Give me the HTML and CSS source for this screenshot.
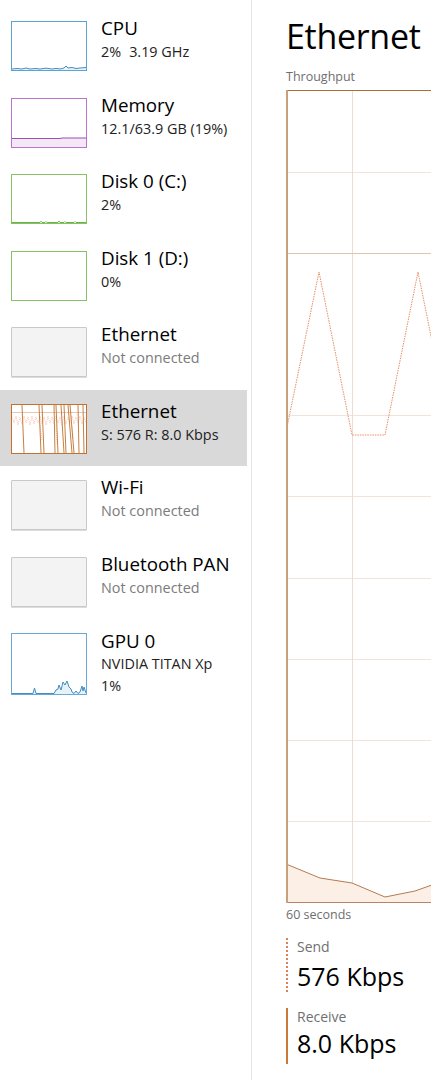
FILE: index.html
```html
<!DOCTYPE html>
<html>
<head>
<meta charset="utf-8">
<link rel="stylesheet" href="styles.css">
</head>
<body>
<div class="app">
  <aside class="sidebar">
    <div class="item">
      <div class="thumb cpu">
        <svg viewBox="0 0 74 48" preserveAspectRatio="none"><path class="fill" d="M0,48 L0,47 L5,46.5 L10,47 L14,46 L18,47 L24,46.5 L28,47 L34,46.2 L40,47 L44,46.4 L48,47 L52,46 L54,44 L56,46 L60,45.5 L64,46.5 L68,46 L74,45.5 L74,48 Z"/><path class="line" d="M0,47 L5,46.5 L10,47 L14,46 L18,47 L24,46.5 L28,47 L34,46.2 L40,47 L44,46.4 L48,47 L52,46 L54,44 L56,46 L60,45.5 L64,46.5 L68,46 L74,45.5"/></svg>
      </div>
      <div class="info">
        <div class="name">CPU</div>
        <div class="sub">2%<span class="gap"></span>3.19 GHz</div>
      </div>
    </div>
    <div class="item">
      <div class="thumb mem">
        <svg viewBox="0 0 74 48" preserveAspectRatio="none"><path class="fill" d="M0,48 L0,39.5 L48,39.5 L50,39 L74,39 L74,48 Z"/><path class="line" d="M0,39.5 L48,39.5 L50,39 L74,39"/></svg>
      </div>
      <div class="info">
        <div class="name">Memory</div>
        <div class="sub">12.1/63.9 GB (19%)</div>
      </div>
    </div>
    <div class="item">
      <div class="thumb disk">
        <svg viewBox="0 0 74 48" preserveAspectRatio="none"><path class="line" d="M0,47.5 L28,47.5 L29,46.2 L30,47.5 L33,47.5 L34,46.5 L35,47.5 L46,47.5 L47,46 L48,47.5 L52,47.5 L53,46.5 L54,47.5 L62,47.5 L63,46.5 L64,47.5 L74,47.5"/></svg>
      </div>
      <div class="info">
        <div class="name">Disk 0 (C:)</div>
        <div class="sub">2%</div>
      </div>
    </div>
    <div class="item">
      <div class="thumb disk"></div>
      <div class="info">
        <div class="name">Disk 1 (D:)</div>
        <div class="sub">0%</div>
      </div>
    </div>
    <div class="item">
      <div class="thumb off"></div>
      <div class="info">
        <div class="name">Ethernet</div>
        <div class="sub muted">Not connected</div>
      </div>
    </div>
    <div class="item selected">
      <div class="thumb eth">
        <svg viewBox="0 0 74 48" preserveAspectRatio="none">
          <path class="grid" d="M0,7.5 L74,7.5"/>
          <path class="dots" d="M0,12 L2,18 L4,11 L6,20 L8,12 L10,19 L12,11 L14,18 L16,12 L18,20 L20,11 L22,19 L24,12 L26,18 L28,11 L30,19 L32,12 L34,20 L36,11 L38,18 L40,12 L42,19 L44,11 L46,18 L48,12 L50,20 L52,11 L54,19 L56,12 L58,18 L60,11 L62,19 L64,12 L66,18 L68,11 L70,19 L72,12 L74,18"/>
          <path class="dots" d="M28,20 L30,36 M44,20 L45,40 M60,22 L61,34"/>
          <path class="bars" d="M10,0 L12,48 M27,0 L29,48 M30,0 L32,48 M42,0 L43,48 M44,0 L46,48 M49,0 L52,48 M52,0 L54,48 M56,0 L60,48 M58,0 L62,48 M66,0 L67,48 M71,0 L72,48"/>
        </svg>
      </div>
      <div class="info">
        <div class="name">Ethernet</div>
        <div class="sub">S: 576 R: 8.0 Kbps</div>
      </div>
    </div>
    <div class="item">
      <div class="thumb off"></div>
      <div class="info">
        <div class="name">Wi-Fi</div>
        <div class="sub muted">Not connected</div>
      </div>
    </div>
    <div class="item">
      <div class="thumb off"></div>
      <div class="info">
        <div class="name">Bluetooth PAN</div>
        <div class="sub muted">Not connected</div>
      </div>
    </div>
    <div class="item">
      <div class="thumb gpu">
        <svg viewBox="0 0 74 60" preserveAspectRatio="none"><path class="fill" d="M0,60 L0,59.5 L21,59.5 L22.5,54 L24,59.5 L42,59.5 L44,56 L46,55 L47,51 L49,56 L51,48 L53,51 L55,47 L57,53 L59,55 L60,58 L62,59.5 L64,57 L66,59.5 L68,58 L70,52 L71,57 L72,53 L74,59 L74,60 Z"/><path class="line" d="M0,59.5 L21,59.5 L22.5,54 L24,59.5 L42,59.5 L44,56 L46,55 L47,51 L49,56 L51,48 L53,51 L55,47 L57,53 L59,55 L60,58 L62,59.5 L64,57 L66,59.5 L68,58 L70,52 L71,57 L72,53 L74,59"/></svg>
      </div>
      <div class="info gpu-info">
        <div class="name">GPU 0</div>
        <div class="sub">NVIDIA TITAN Xp</div>
        <div class="sub">1%</div>
      </div>
    </div>
  </aside>

  <main class="detail">
    <h1 class="title">Ethernet</h1>
    <div class="caption">Throughput</div>
    <div class="chart">
      <svg width="200" height="813" viewBox="0 0 200 813">
        <path class="hgrid" d="M0,82.5 H200 M0,325.5 H200 M0,406.5 H200 M0,488.5 H200 M0,569.5 H200 M0,650.5 H200 M0,731.5 H200"/>
        <path class="vgrid" d="M66.5,0 V813"/>
        <path class="scale" d="M0,163.5 H200"/>
        <path class="recv-fill" d="M0,774 L34,788 L66,793 L99,807 L129,801 L160,790 L200,785 L200,812 L0,812 Z"/>
        <path class="recv-line" d="M0,774 L34,788 L66,793 L99,807 L129,801 L160,790 L200,785"/>
        <path class="send" d="M0,342 L33,182 L66,345 L99,345 L132,182 L165,345 L200,345"/>
        <path class="top" d="M0,0.5 H200"/>
        <path class="bottom" d="M0,812.5 H200"/>
        <path class="left" d="M1,0 V813"/>
      </svg>
    </div>
    <div class="caption axis">60 seconds</div>
    <div class="stat send-stat">
      <div class="stat-label">Send</div>
      <div class="stat-value">576 Kbps</div>
    </div>
    <div class="stat recv-stat">
      <div class="stat-label">Receive</div>
      <div class="stat-value">8.0 Kbps</div>
    </div>
  </main>
</div>
</body>
</html>
```

FILE: styles.css
```css
html, body {
  margin: 0;
  padding: 0;
  background: #ffffff;
  overflow: hidden;
}
body {
  width: 431px;
  height: 1080px;
  font-family: "Open Sans", "Noto Sans", sans-serif;
  color: #000;
}
.app {
  display: flex;
  height: 1080px;
}
.sidebar {
  width: 247px;
  flex: 0 0 247px;
  padding-top: 7px;
  padding-right: 4px;
  border-right: 1px solid #e3e3e3;
}
.item {
  height: 76.5px;
  box-sizing: border-box;
  display: flex;
  align-items: flex-start;
  padding-left: 11px;
}
.item.selected {
  background: #d9d9d9;
}
.thumb {
  width: 74px;
  height: 48px;
  margin-top: 14px;
  border: 1px solid #999;
  background: #fff;
  flex: 0 0 auto;
}
.thumb svg {
  display: block;
  width: 74px;
  height: 48px;
}
.thumb .line {
  fill: none;
  stroke-width: 1;
}
.thumb.cpu { border-color: #5aa4d0; }
.thumb.cpu .line { stroke: #3f8fc3; }
.thumb.cpu .fill { fill: #eaf3f9; }
.thumb.mem { border-color: #b975ca; }
.thumb.mem .line { stroke: #9d4db3; }
.thumb.mem .fill { fill: #f4e8f6; }
.thumb.disk { border-color: #86c266; }
.thumb.disk .line { stroke: #6cb14a; }
.thumb.off {
  border-color: #c9c9c9;
  background: #f3f3f3;
  border-radius: 1px;
  box-shadow: 0 1px 0 #dcdcdc;
}
.thumb.eth {
  border-color: #c3712c;
}
.thumb.eth .grid { stroke: #e8c9b0; stroke-width: 1; fill: none; }
.thumb.eth .dots { stroke: #ee9f7f; stroke-width: 0.6; stroke-dasharray: 1 1; fill: none; }
.thumb.eth .bars { stroke: #c0702a; stroke-width: 0.9; fill: none; }
.thumb.gpu {
  height: 60px;
  border-color: #6aa9d5;
}
.thumb.gpu svg { height: 60px; }
.thumb.gpu .line { stroke: #3f8fc3; }
.thumb.gpu .fill { fill: #e6f1f8; }

.info {
  margin-left: 14px;
  padding-top: 9px;
}
.name {
  font-size: 18.8px;
  line-height: 25px;
  color: #000;
  white-space: nowrap;
}
.sub {
  font-size: 14.4px;
  line-height: 22px;
  color: #222;
  white-space: nowrap;
}
.sub.muted { color: #7b7b7b; }
.gap { display: inline-block; width: 8px; }
.gpu-info { padding-top: 10px; }
.gpu-info .name { margin-bottom: -1px; }

.detail {
  flex: 1 1 auto;
  min-width: 0;
  overflow: hidden;
  padding-left: 34px;
  padding-top: 16px;
}
.title {
  margin: 0;
  font-weight: 400;
  font-size: 34px;
  line-height: 40px;
  letter-spacing: -0.3px;
  white-space: nowrap;
}
.caption {
  font-size: 12.5px;
  line-height: 16px;
  color: #6e6e6e;
  margin-top: 13px;
  white-space: nowrap;
}
.chart {
  margin-top: 5px;
  width: 200px;
  height: 813px;
}
.chart svg { display: block; }
.hgrid { stroke: #f1e3da; stroke-width: 1; fill: none; }
.vgrid { stroke: #eddcd2; stroke-width: 1; fill: none; }
.scale { stroke: #e7c2a8; stroke-width: 1; fill: none; }
.top { stroke: #ad6d31; stroke-width: 1; fill: none; }
.bottom { stroke: #b98560; stroke-width: 1; fill: none; }
.left { stroke: #c8a07c; stroke-width: 2; fill: none; }
.recv-fill { fill: #fcefe6; }
.recv-line { stroke: #b57a52; stroke-width: 1; fill: none; }
.send { stroke: #e68f66; stroke-width: 1; stroke-dasharray: 1.5 1; fill: none; }
.axis { margin-top: 4px; }

.stat {
  padding-left: 9px;
  white-space: nowrap;
}
.send-stat {
  margin-top: 15px;
  border-left: 2px dotted #d9825a;
  height: 54px;
}
.send-stat .stat-value { margin-top: 3px; }
.recv-stat {
  margin-top: 16px;
  border-left: 2px solid #c97a3b;
  height: 56px;
}
.stat-label {
  font-size: 14px;
  line-height: 18px;
  color: #707070;
}
.stat-value {
  font-size: 25px;
  line-height: 34px;
  color: #000;
}
```
